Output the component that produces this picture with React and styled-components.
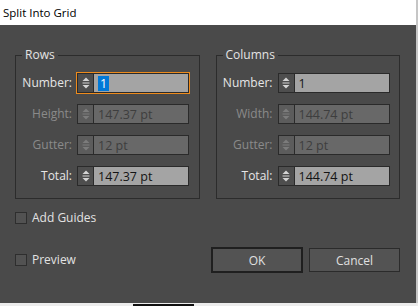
import styled, { createGlobalStyle } from "styled-components";

const GlobalStyle = createGlobalStyle`
  html, body {
    margin: 0;
    padding: 0;
    background: #ffffff;
  }
  body {
    font-family: "Open Sans", "Liberation Sans", sans-serif;
    font-size: 12px;
  }
`;

const Screen = styled.div`
  width: 418px;
  height: 306px;
  display: flex;
  flex-direction: column;
  background: #ffffff;
  overflow: hidden;
`;

const Window = styled.div`
  width: 416px;
  height: 303px;
  display: flex;
  flex-direction: column;
  border-right: 2px solid #c6c6c6;
`;

const TitleBar = styled.div`
  height: 25px;
  display: flex;
  align-items: center;
  padding-left: 3px;
  background: #ffffff;
  color: #000000;
  font-size: 11.5px;
`;

const Body = styled.div`
  flex: 1;
  background: #4a4a4a;
  padding: 22px 16px 0 15px;
  display: flex;
  flex-direction: column;
`;

const Groups = styled.div`
  display: flex;
  gap: 16px;
`;

const Group = styled.fieldset`
  width: 185px;
  box-sizing: border-box;
  margin: 0;
  padding: 10px 0 12px 0;
  border: 1px solid #2c2c2c;
  display: flex;
  flex-direction: column;
  gap: 11px;
`;

const Legend = styled.legend`
  margin-left: 6px;
  padding: 0 3px;
  line-height: 16px;
  color: #e4e4e4;
`;

const FieldRow = styled.div`
  display: flex;
  align-items: center;
  gap: 5px;
`;

const Label = styled.span`
  width: 56px;
  text-align: right;
  color: ${(p) => (p.$disabled ? "#8a8a8a" : "#e6e6e6")};
  line-height: 16px;
`;

const Spinbox = styled.div`
  width: 112px;
  height: 20px;
  box-sizing: border-box;
  display: flex;
  border: 1px solid #2a2a2a;
  outline: ${(p) => (p.$focused ? "1px solid #ee8b1c" : "none")};
`;

const Spinner = styled.div`
  width: 15px;
  display: flex;
  align-items: center;
  justify-content: center;
  background: ${(p) => (p.$disabled ? "#5c5c5c" : "#4e4e4e")};
  border-right: 1px solid #2a2a2a;
`;

const Value = styled.div`
  flex: 1;
  display: flex;
  align-items: center;
  padding-left: 4px;
  background: ${(p) => (p.$disabled ? "#686868" : "#a4a4a4")};
  color: ${(p) => (p.$disabled ? "#3e3e3e" : "#141414")};
  font-size: 12.5px;
`;

const Selected = styled.span`
  background: #0078d7;
  color: #ffffff;
  padding: 0 2px;
  line-height: 15px;
`;

const CheckRow = styled.label`
  display: flex;
  align-items: center;
  gap: 5px;
  color: #e2e2e2;
  line-height: 16px;
  margin-top: ${(p) => p.$top || 0}px;
`;

const Box = styled.span`
  width: 12px;
  height: 12px;
  box-sizing: border-box;
  border: 1px solid #2e2e2e;
  background: #525252;
`;

const Footer = styled.div`
  margin-top: 21px;
  display: flex;
  align-items: center;
  justify-content: space-between;
`;

const Buttons = styled.div`
  display: flex;
  align-items: center;
  gap: 6px;
`;

const Button = styled.button`
  box-sizing: border-box;
  width: ${(p) => (p.$primary ? 92 : 91)}px;
  height: ${(p) => (p.$primary ? 26 : 24)}px;
  border: ${(p) => (p.$primary ? "2px solid #1f1f1f" : "1px solid #2b2b2b")};
  background: #535353;
  color: #e0e0e0;
  font-family: inherit;
  font-size: 12px;
  padding: 0;
`;

const BottomStrip = styled.div`
  height: 3px;
  background: #ececec;
  display: flex;
`;

const Peek = styled.div`
  margin: 1px 0 0 133px;
  width: 61px;
  background: #111111;
`;

const SpinIcon = ({ disabled }) => {
  const c = disabled ? "#7c7c7c" : "#d4d4d4";
  return (
    <svg width="14" height="18" viewBox="0 0 14 18">
      <polygon points="3.5,7 10.5,7 7,3.5" fill={c} />
      <rect x="3.5" y="8.5" width="7" height="1" fill={c} />
      <polygon points="3.5,11 10.5,11 7,14.5" fill={c} />
    </svg>
  );
};

const Field = ({ label, value, disabled, focused }) => (
  <FieldRow>
    <Label $disabled={disabled}>{label}</Label>
    <Spinbox $focused={focused}>
      <Spinner $disabled={disabled}>
        <SpinIcon disabled={disabled} />
      </Spinner>
      <Value $disabled={disabled}>
        {focused ? <Selected>{value}</Selected> : value}
      </Value>
    </Spinbox>
  </FieldRow>
);

export default function App() {
  return (
    <>
      <GlobalStyle />
      <Screen>
        <Window>
          <TitleBar>Split Into Grid</TitleBar>
          <Body>
            <Groups>
              <Group>
                <Legend>Rows</Legend>
                <Field label="Number:" value="1" focused />
                <Field label="Height:" value="147.37 pt" disabled />
                <Field label="Gutter:" value="12 pt" disabled />
                <Field label="Total:" value="147.37 pt" />
              </Group>
              <Group>
                <Legend>Columns</Legend>
                <Field label="Number:" value="1" />
                <Field label="Width:" value="144.74 pt" disabled />
                <Field label="Gutter:" value="12 pt" disabled />
                <Field label="Total:" value="144.74 pt" />
              </Group>
            </Groups>
            <CheckRow $top={11}>
              <Box />
              Add Guides
            </CheckRow>
            <Footer>
              <CheckRow>
                <Box />
                Preview
              </CheckRow>
              <Buttons>
                <Button $primary>OK</Button>
                <Button>Cancel</Button>
              </Buttons>
            </Footer>
          </Body>
        </Window>
        <BottomStrip>
          <Peek />
        </BottomStrip>
      </Screen>
    </>
  );
}
